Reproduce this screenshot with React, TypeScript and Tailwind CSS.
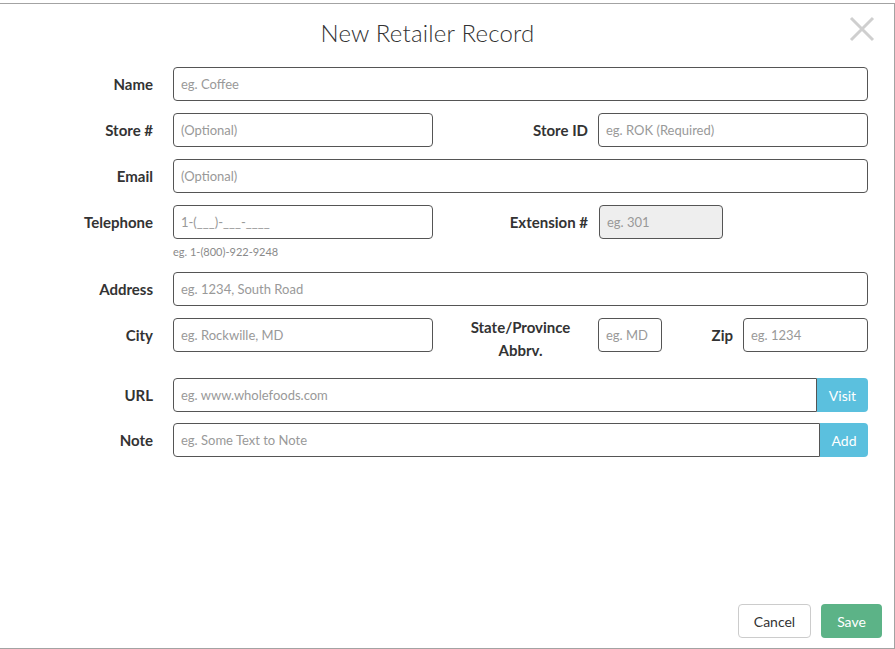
import React from "react";

const inputBase =
  "h-[34px] border border-[#555] rounded-[4px] px-[7px] text-[13px] text-[#333] placeholder:text-[#999] outline-none";

function Label({ children, className = "" }: { children: React.ReactNode; className?: string }) {
  return (
    <div className={`text-[15px] font-bold text-[#333] text-right leading-[18px] ${className}`}>{children}</div>
  );
}

export default function App() {
  return (
    <div
      className="w-[895px] h-[649px] bg-white relative"
      style={{ fontFamily: "Lato, 'Open Sans', sans-serif" }}
    >
      <div className="absolute left-[-2px] top-[3px] w-[897px] h-[646px] border border-[#a3a3a3] flex flex-col">
        <div className="h-[63px] flex items-center justify-center relative">
          <h1 className="text-[24px] font-light text-[#333] tracking-[0.2px] mt-[-5px] mr-[38px]">New Retailer Record</h1>
          <button className="absolute right-[18px] top-[11px] w-[28px] h-[28px] flex items-center justify-center">
            <svg width="26" height="26" viewBox="0 0 26 26">
              <path d="M2 2 L24 24 M24 2 L2 24" stroke="#cfcfcf" strokeWidth="3" />
            </svg>
          </button>
        </div>

        <div className="flex flex-col">
          {/* Name */}
          <div className="flex items-center h-[34px]">
            <Label className="w-[154px]">Name</Label>
            <input className={`${inputBase} bg-white ml-[20px] w-[695px]`} placeholder="eg. Coffee" />
          </div>
          {/* Store */}
          <div className="flex items-center h-[34px] mt-[12px]">
            <Label className="w-[154px]">Store #</Label>
            <input className={`${inputBase} bg-white ml-[20px] w-[260px]`} placeholder="(Optional)" />
            <Label className="w-[155px]">Store ID</Label>
            <input className={`${inputBase} bg-white ml-[10px] w-[270px]`} placeholder="eg. ROK (Required)" />
          </div>
          {/* Email */}
          <div className="flex items-center h-[34px] mt-[12px]">
            <Label className="w-[154px]">Email</Label>
            <input className={`${inputBase} bg-white ml-[20px] w-[695px]`} placeholder="(Optional)" />
          </div>
          {/* Telephone */}
          <div className="flex items-center h-[34px] mt-[12px]">
            <Label className="w-[154px]">Telephone</Label>
            <input className={`${inputBase} bg-white ml-[20px] w-[260px]`} placeholder="1-(___)-___-____" />
            <Label className="w-[155px]">Extension #</Label>
            <input
              className={`${inputBase} ml-[11px] w-[124px] bg-[#eeeeee]`}
              placeholder="eg. 301"
              disabled
            />
          </div>
          <div className="ml-[174px] mt-[6px] text-[11px] text-[#8a8a8a] leading-[14px]">eg. 1-(800)-922-9248</div>
          {/* Address */}
          <div className="flex items-center h-[34px] mt-[13px]">
            <Label className="w-[154px]">Address</Label>
            <input className={`${inputBase} bg-white ml-[20px] w-[695px]`} placeholder="eg. 1234, South Road" />
          </div>
          {/* City */}
          <div className="flex items-start mt-[12px] h-[47px]">
            <Label className="w-[154px] mt-[8px]">City</Label>
            <input className={`${inputBase} bg-white ml-[20px] w-[260px]`} placeholder="eg. Rockwille, MD" />
            <div className="w-[155px] text-center text-[15px] font-bold text-[#333] leading-[23px] mt-[-2px] pl-[20px]">
              State/Province
              <br />
              Abbrv.
            </div>
            <input className={`${inputBase} bg-white ml-[10px] w-[64px]`} placeholder="eg. MD" />
            <Label className="w-[71px] mt-[8px]">Zip</Label>
            <input className={`${inputBase} bg-white ml-[10px] w-[125px]`} placeholder="eg. 1234" />
          </div>
          {/* URL */}
          <div className="flex items-center h-[34px] mt-[13px]">
            <Label className="w-[154px]">URL</Label>
            <div className="flex ml-[20px] w-[695px]">
              <input
                className={`${inputBase} bg-white flex-1 min-w-0 rounded-r-none`}
                placeholder="eg. www.wholefoods.com"
              />
              <button className="h-[34px] w-[51px] bg-[#5bc0de] text-white text-[14px] rounded-r-[4px]">Visit</button>
            </div>
          </div>
          {/* Note */}
          <div className="flex items-center h-[34px] mt-[11px]">
            <Label className="w-[154px]">Note</Label>
            <div className="flex ml-[20px] w-[695px]">
              <input
                className={`${inputBase} bg-white flex-1 min-w-0 rounded-r-none`}
                placeholder="eg. Some Text to Note"
              />
              <button className="h-[34px] w-[48px] bg-[#5bc0de] text-white text-[14px] rounded-r-[4px]">Add</button>
            </div>
          </div>
        </div>

        <div className="mt-auto flex justify-end gap-[10px] pr-[12px] pb-[10px]">
          <button className="h-[34px] w-[73px] border border-[#ccc] rounded-[4px] bg-white text-[14px] text-[#333]">
            Cancel
          </button>
          <button className="h-[34px] w-[61px] rounded-[4px] bg-[#5cb387] text-white text-[14px]">Save</button>
        </div>
      </div>
    </div>
  );
}
